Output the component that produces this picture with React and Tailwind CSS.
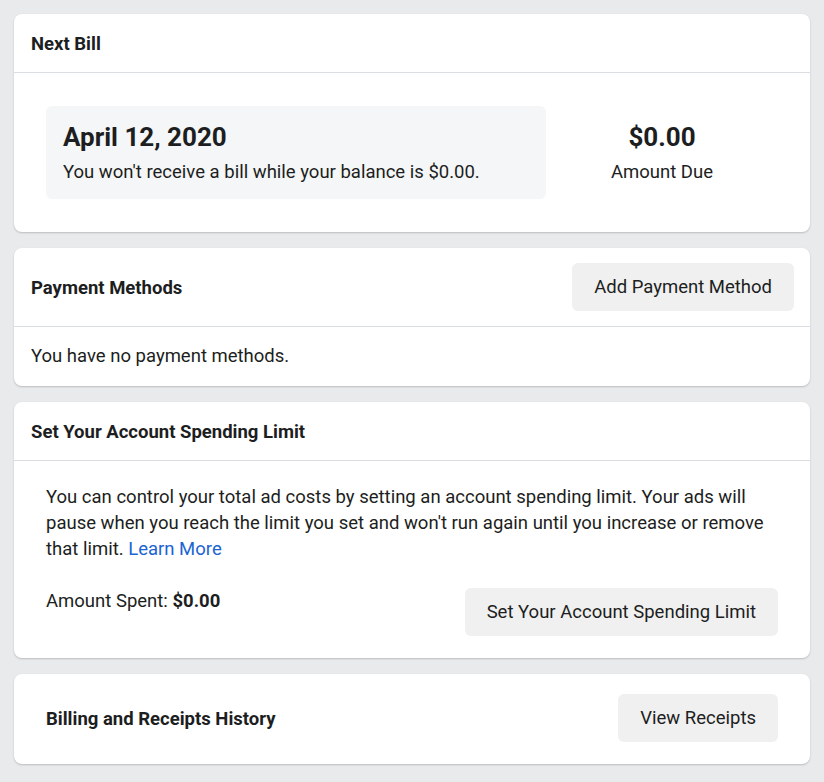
const font = { fontFamily: 'Roboto, "Liberation Sans", Arial, sans-serif' };

function Card({ children }) {
    return (
        <section className="overflow-hidden rounded-lg bg-white shadow-[0_1px_2px_rgba(0,0,0,0.2)]">
            {children}
        </section>
    );
}

function GrayButton({ children }) {
    return (
        <button className="h-12 shrink-0 rounded-md bg-[#f0f0f1] px-[22px] pt-[2px] text-[18.5px] text-[#1c1e21]">
            {children}
        </button>
    );
}

function Heading({ children }) {
    return <h2 className="pt-1 text-[18.5px] font-bold">{children}</h2>;
}

export default function App() {
    return (
        <div className="min-h-screen bg-[#e9eaec] p-[14px] text-[#1c1e21]" style={font}>
            <div className="flex flex-col gap-4">
                <Card>
                    <div className="flex h-[59px] items-center border-b border-[#dadde1] px-[17px]">
                        <Heading>Next Bill</Heading>
                    </div>
                    <div className="flex items-center px-8 py-[33px]">
                        <div className="flex h-[93px] w-[500px] flex-col justify-center rounded-md bg-[#f5f6f7] px-[17px]">
                            <p className="text-[26px] font-bold leading-[30px]">April 12, 2020</p>
                            <p className="mt-2 text-[18.5px] leading-6">You won't receive a bill while your balance is $0.00.</p>
                        </div>
                        <div className="flex flex-1 flex-col items-center">
                            <p className="text-[26px] font-bold leading-[30px]">$0.00</p>
                            <p className="mt-2 text-[18.5px] leading-6">Amount Due</p>
                        </div>
                    </div>
                </Card>

                <Card>
                    <div className="flex h-[79px] items-center justify-between border-b border-[#dadde1] pl-[17px] pr-4">
                        <Heading>Payment Methods</Heading>
                        <GrayButton>Add Payment Method</GrayButton>
                    </div>
                    <div className="flex h-[59px] items-center px-[17px]">
                        <p className="text-[18.5px]">You have no payment methods.</p>
                    </div>
                </Card>

                <Card>
                    <div className="flex h-[59px] items-center border-b border-[#dadde1] px-[17px]">
                        <Heading>Set Your Account Spending Limit</Heading>
                    </div>
                    <div className="px-8 pb-[22px] pt-[23px]">
                        <p className="text-[18.5px] leading-[26px]">
                            You can control your total ad costs by setting an account spending limit. Your ads will
                            pause when you reach the limit you set and won't run again until you increase or remove
                            that limit. <a className="text-[#1b64d1]">Learn More</a>
                        </p>
                        <div className="mt-[26px] flex items-start justify-between">
                            <p className="text-[18.5px] leading-[26px]">
                                Amount Spent: <strong>$0.00</strong>
                            </p>
                            <GrayButton>Set Your Account Spending Limit</GrayButton>
                        </div>
                    </div>
                </Card>

                <Card>
                    <div className="flex items-center justify-between px-8 pb-[22px] pt-5">
                        <Heading>Billing and Receipts History</Heading>
                        <GrayButton>View Receipts</GrayButton>
                    </div>
                </Card>
            </div>
        </div>
    );
}
